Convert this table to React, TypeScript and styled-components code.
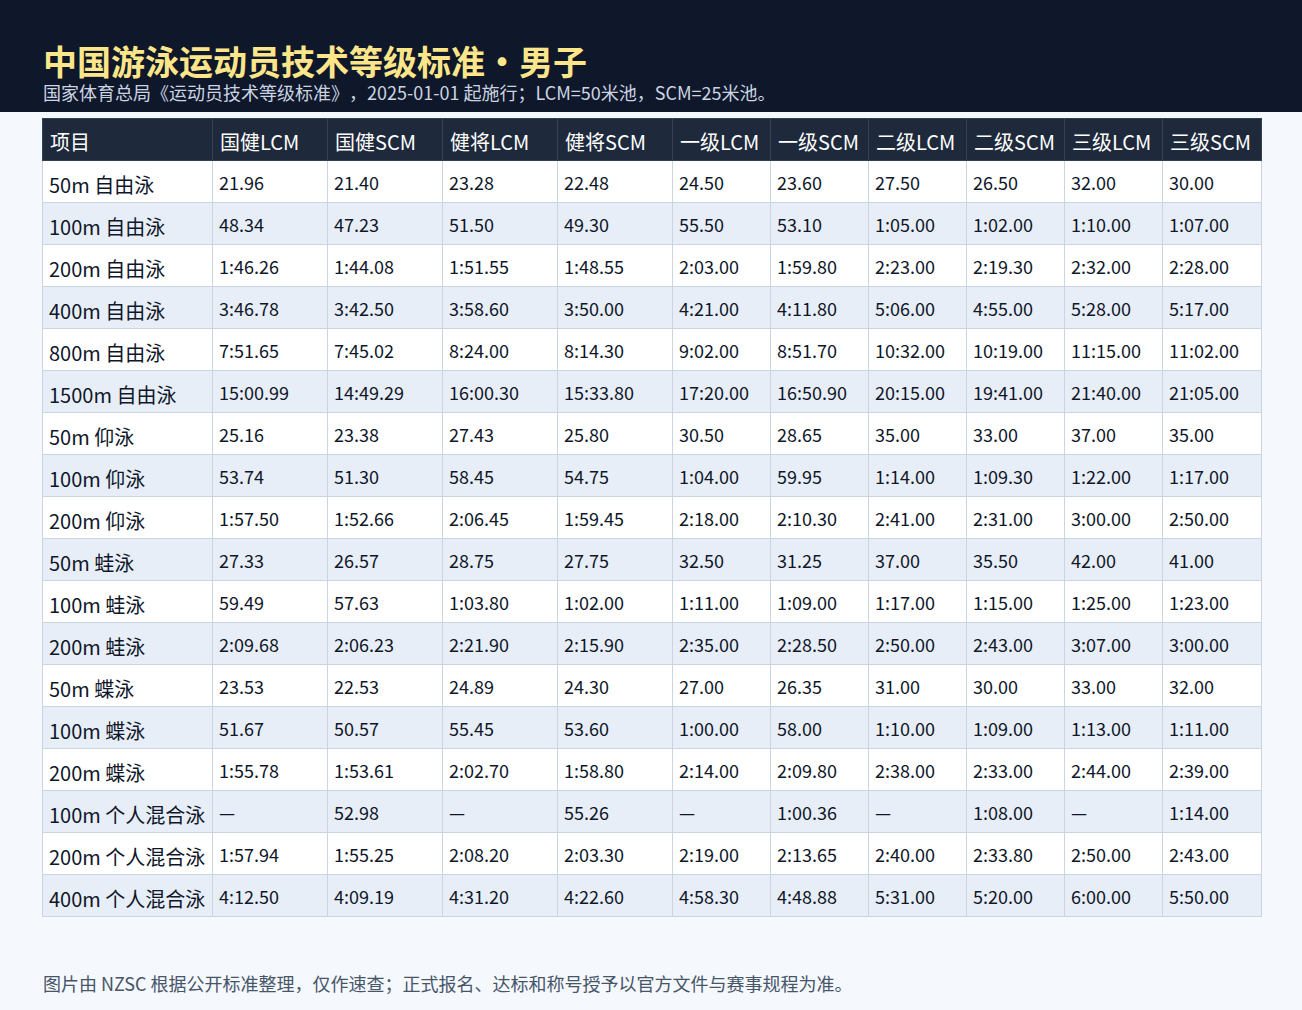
import React from "react";
import styled, { createGlobalStyle } from "styled-components";

const Global = createGlobalStyle`
  html, body { margin: 0; padding: 0; }
  body {
    background: #f5f8fc;
    font-family: "Noto Sans CJK SC", "Noto Sans", sans-serif;
    text-spacing-trim: space-all;
    width: 1302px;
    height: 1010px;
    overflow: hidden;
  }
`;

const Page = styled.div`
  width: 1302px;
  height: 1010px;
  display: flex;
  flex-direction: column;
`;

const Header = styled.header`
  background: #0f172a;
  height: 112px;
  box-sizing: border-box;
  padding: 42px 43px 0;
  display: flex;
  flex-direction: column;
`;

const Title = styled.h1`
  margin: 0;
  color: #fde68a;
  font-size: 34px;
  font-weight: 700;
  line-height: 38px;
  white-space: nowrap;
`;

const Subtitle = styled.p`
  margin: 0;
  color: #cbd5e1;
  font-size: 18px;
  line-height: 24px;
  white-space: nowrap;
`;

const TableWrap = styled.div`
  padding: 6px 0 0 42px;
`;

const Table = styled.table`
  border-collapse: collapse;
  table-layout: fixed;
  width: 1219px;
`;

const HeadCell = styled.th`
  background: #1e293b;
  color: #ffffff;
  font-size: 20px;
  font-weight: 400;
  text-align: left;
  height: 42px;
  box-sizing: border-box;
  padding: 4px 0 0 7px;
  border: 1px solid #334155;
  white-space: nowrap;
  overflow: hidden;
`;

const Row = styled.tr<{ $alt: boolean }>`
  background: ${(p) => (p.$alt ? "#e8eef7" : "#ffffff")};
`;

const NameCell = styled.td`
  font-size: 20px;
  color: #0f172a;
  height: 42px;
  box-sizing: border-box;
  padding: 5px 0 0 6px;
  border: 1px solid #cbd5e1;
  white-space: nowrap;
  overflow: hidden;
`;

const Cell = styled.td`
  font-size: 18px;
  color: #0f172a;
  height: 42px;
  box-sizing: border-box;
  padding: 1px 0 0 6px;
  border: 1px solid #cbd5e1;
  white-space: nowrap;
  overflow: hidden;
`;

const Footer = styled.p`
  margin: 54px 0 0 43px;
  color: #475569;
  font-size: 18px;
  line-height: 24px;
  white-space: nowrap;
`;

const heads = ["项目", "国健LCM", "国健SCM", "健将LCM", "健将SCM", "一级LCM", "一级SCM", "二级LCM", "二级SCM", "三级LCM", "三级SCM"];
const widths = [170, 115, 115, 115, 115, 98, 98, 98, 98, 98, 99];

const rows: string[][] = [
  ["50m 自由泳", "21.96", "21.40", "23.28", "22.48", "24.50", "23.60", "27.50", "26.50", "32.00", "30.00"],
  ["100m 自由泳", "48.34", "47.23", "51.50", "49.30", "55.50", "53.10", "1:05.00", "1:02.00", "1:10.00", "1:07.00"],
  ["200m 自由泳", "1:46.26", "1:44.08", "1:51.55", "1:48.55", "2:03.00", "1:59.80", "2:23.00", "2:19.30", "2:32.00", "2:28.00"],
  ["400m 自由泳", "3:46.78", "3:42.50", "3:58.60", "3:50.00", "4:21.00", "4:11.80", "5:06.00", "4:55.00", "5:28.00", "5:17.00"],
  ["800m 自由泳", "7:51.65", "7:45.02", "8:24.00", "8:14.30", "9:02.00", "8:51.70", "10:32.00", "10:19.00", "11:15.00", "11:02.00"],
  ["1500m 自由泳", "15:00.99", "14:49.29", "16:00.30", "15:33.80", "17:20.00", "16:50.90", "20:15.00", "19:41.00", "21:40.00", "21:05.00"],
  ["50m 仰泳", "25.16", "23.38", "27.43", "25.80", "30.50", "28.65", "35.00", "33.00", "37.00", "35.00"],
  ["100m 仰泳", "53.74", "51.30", "58.45", "54.75", "1:04.00", "59.95", "1:14.00", "1:09.30", "1:22.00", "1:17.00"],
  ["200m 仰泳", "1:57.50", "1:52.66", "2:06.45", "1:59.45", "2:18.00", "2:10.30", "2:41.00", "2:31.00", "3:00.00", "2:50.00"],
  ["50m 蛙泳", "27.33", "26.57", "28.75", "27.75", "32.50", "31.25", "37.00", "35.50", "42.00", "41.00"],
  ["100m 蛙泳", "59.49", "57.63", "1:03.80", "1:02.00", "1:11.00", "1:09.00", "1:17.00", "1:15.00", "1:25.00", "1:23.00"],
  ["200m 蛙泳", "2:09.68", "2:06.23", "2:21.90", "2:15.90", "2:35.00", "2:28.50", "2:50.00", "2:43.00", "3:07.00", "3:00.00"],
  ["50m 蝶泳", "23.53", "22.53", "24.89", "24.30", "27.00", "26.35", "31.00", "30.00", "33.00", "32.00"],
  ["100m 蝶泳", "51.67", "50.57", "55.45", "53.60", "1:00.00", "58.00", "1:10.00", "1:09.00", "1:13.00", "1:11.00"],
  ["200m 蝶泳", "1:55.78", "1:53.61", "2:02.70", "1:58.80", "2:14.00", "2:09.80", "2:38.00", "2:33.00", "2:44.00", "2:39.00"],
  ["100m 个人混合泳", "—", "52.98", "—", "55.26", "—", "1:00.36", "—", "1:08.00", "—", "1:14.00"],
  ["200m 个人混合泳", "1:57.94", "1:55.25", "2:08.20", "2:03.30", "2:19.00", "2:13.65", "2:40.00", "2:33.80", "2:50.00", "2:43.00"],
  ["400m 个人混合泳", "4:12.50", "4:09.19", "4:31.20", "4:22.60", "4:58.30", "4:48.88", "5:31.00", "5:20.00", "6:00.00", "5:50.00"],
];

export default function App() {
  return (
    <Page>
      <Global />
      <Header>
        <Title>中国游泳运动员技术等级标准·男子</Title>
        <Subtitle>国家体育总局《运动员技术等级标准》，2025-01-01 起施行；LCM=50米池，SCM=25米池。</Subtitle>
      </Header>
      <TableWrap>
        <Table>
          <colgroup>
            {widths.map((w, i) => (
              <col key={i} style={{ width: w }} />
            ))}
          </colgroup>
          <thead>
            <tr>
              {heads.map((h) => (
                <HeadCell key={h}>{h}</HeadCell>
              ))}
            </tr>
          </thead>
          <tbody>
            {rows.map((r, i) => (
              <Row key={r[0]} $alt={i % 2 === 1}>
                <NameCell>{r[0]}</NameCell>
                {r.slice(1).map((v, j) => (
                  <Cell key={j}>{v}</Cell>
                ))}
              </Row>
            ))}
          </tbody>
        </Table>
      </TableWrap>
      <Footer>图片由 NZSC 根据公开标准整理，仅作速查；正式报名、达标和称号授予以官方文件与赛事规程为准。</Footer>
    </Page>
  );
}
